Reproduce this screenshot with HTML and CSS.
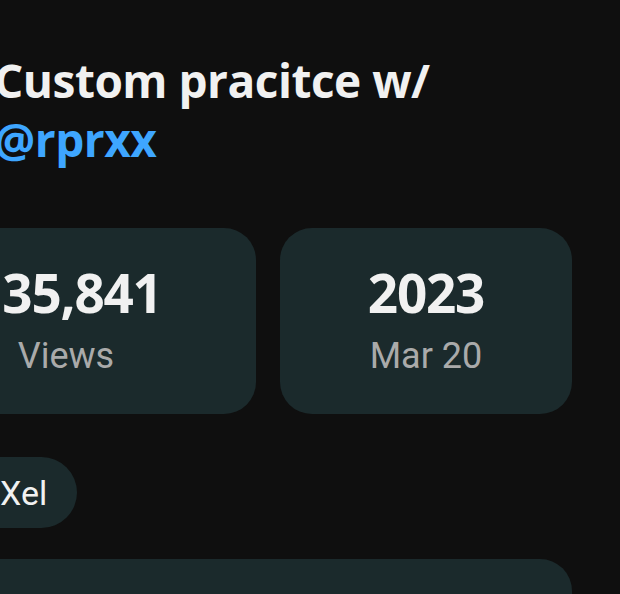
FILE: index.html
```html
<!DOCTYPE html>
<html lang="en">
<head>
<meta charset="utf-8">
<title>Custom pracitce w/ @rprxx</title>
<link rel="stylesheet" href="styles.css">
</head>
<body>
  <main class="panel">
    <h1 class="title">Custom pracitce w/ <span class="mention">@rprxx</span></h1>

    <section class="stats">
      <div class="stat stat--views">
        <span class="stat-value stat-value--clipped">35,841</span>
        <span class="stat-label">Views</span>
      </div>
      <div class="stat stat--date">
        <span class="stat-value">2023</span>
        <span class="stat-label">Mar 20</span>
      </div>
    </section>

    <div class="chips">
      <span class="chip">Xel</span>
    </div>

    <div class="card-bottom"></div>
  </main>
</body>
</html>
```

FILE: styles.css
```css
html, body {
  margin: 0;
  padding: 0;
  background: #0f0f0f;
  overflow: hidden;
}

body {
  width: 620px;
  height: 594px;
}

.panel {
  display: flex;
  flex-direction: column;
  align-items: flex-start;
}

.title {
  margin: 51px 0 0 -6px;
  width: 470px;
  font-family: "Open Sans", "Noto Sans", sans-serif;
  font-weight: 700;
  font-size: 46px;
  line-height: 59px;
  letter-spacing: -0.5px;
  color: #f1f1f1;
}

.mention {
  color: #3ea6ff;
}

.stats {
  display: flex;
  gap: 24px;
  margin: 59px 0 0 -124px;
}

.stat {
  height: 186px;
  border-radius: 32px;
  background: #1b2a2c;
  display: flex;
  flex-direction: column;
  align-items: center;
  gap: 10px;
  box-sizing: border-box;
  padding-top: 34px;
}

.stat--views {
  width: 380px;
}

.stat--date {
  width: 292px;
}

.stat-value {
  font-family: "Open Sans", "Noto Sans", sans-serif;
  font-weight: 700;
  font-size: 53px;
  line-height: 62px;
  letter-spacing: -1.2px;
  color: #f1f1f1;
}

.stat-value--clipped {
  padding-left: 32px;
}

.stat-label {
  font-family: Roboto, "Liberation Sans", sans-serif;
  font-size: 36px;
  line-height: 44px;
  color: #aaaaaa;
}

.chips {
  display: flex;
  margin: 43px 0 0 -62px;
}

.chip {
  height: 71px;
  display: flex;
  align-items: center;
  padding: 0 30px 0 62px;
  border-radius: 36px;
  background: #1b2a2c;
  font-family: Roboto, "Liberation Sans", sans-serif;
  font-weight: 400;
  font-size: 34px;
  color: #f1f1f1;
}

.card-bottom {
  margin: 31px 0 0 -124px;
  width: 696px;
  height: 120px;
  border-radius: 32px;
  background: #1b2a2c;
}
```
